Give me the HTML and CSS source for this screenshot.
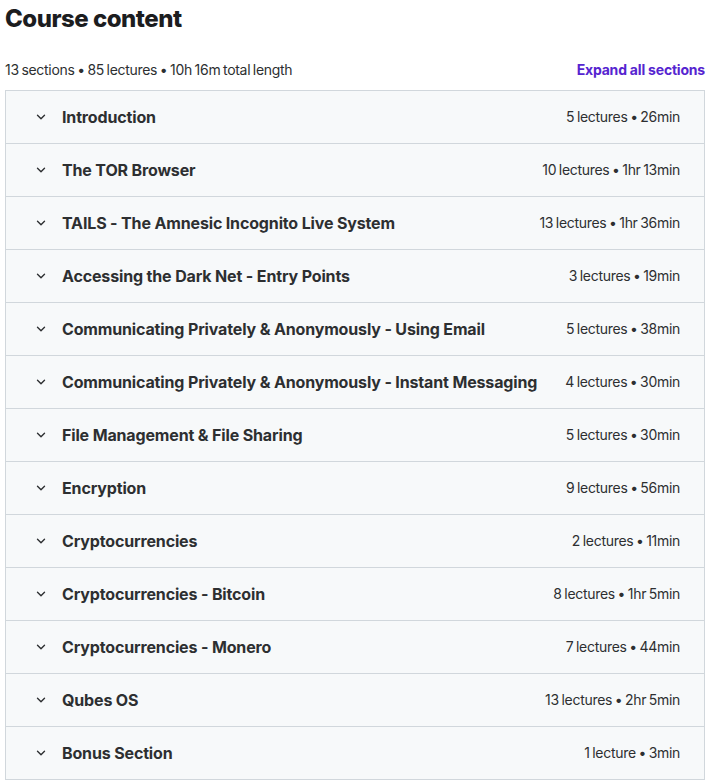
FILE: index.html
```html
<!DOCTYPE html>
<html lang="en">
<head>
    <meta charset="UTF-8">
    <title>Course content</title>
    <link rel="stylesheet" href="styles.css">
</head>
<body>
    <div class="curriculum">
        <h2 class="curriculum-title">Course content</h2>

        <div class="curriculum-meta">
            <span>13 sections • 85 lectures • 10h 16m total length</span>
            <button class="expand-all">Expand all sections</button>
        </div>

        <div class="sections">
            <div class="section-row">
                <svg class="chevron" viewBox="0 0 24 24"><path d="M6 9l6 6 6-6"/></svg>
                <span class="section-title">Introduction</span>
                <span class="section-info">5 lectures • 26min</span>
            </div>
            <div class="section-row">
                <svg class="chevron" viewBox="0 0 24 24"><path d="M6 9l6 6 6-6"/></svg>
                <span class="section-title">The TOR Browser</span>
                <span class="section-info">10 lectures • 1hr 13min</span>
            </div>
            <div class="section-row">
                <svg class="chevron" viewBox="0 0 24 24"><path d="M6 9l6 6 6-6"/></svg>
                <span class="section-title">TAILS - The Amnesic Incognito Live System</span>
                <span class="section-info">13 lectures • 1hr 36min</span>
            </div>
            <div class="section-row">
                <svg class="chevron" viewBox="0 0 24 24"><path d="M6 9l6 6 6-6"/></svg>
                <span class="section-title">Accessing the Dark Net - Entry Points</span>
                <span class="section-info">3 lectures • 19min</span>
            </div>
            <div class="section-row">
                <svg class="chevron" viewBox="0 0 24 24"><path d="M6 9l6 6 6-6"/></svg>
                <span class="section-title">Communicating Privately &amp; Anonymously - Using Email</span>
                <span class="section-info">5 lectures • 38min</span>
            </div>
            <div class="section-row">
                <svg class="chevron" viewBox="0 0 24 24"><path d="M6 9l6 6 6-6"/></svg>
                <span class="section-title">Communicating Privately &amp; Anonymously - Instant Messaging</span>
                <span class="section-info">4 lectures • 30min</span>
            </div>
            <div class="section-row">
                <svg class="chevron" viewBox="0 0 24 24"><path d="M6 9l6 6 6-6"/></svg>
                <span class="section-title">File Management &amp; File Sharing</span>
                <span class="section-info">5 lectures • 30min</span>
            </div>
            <div class="section-row">
                <svg class="chevron" viewBox="0 0 24 24"><path d="M6 9l6 6 6-6"/></svg>
                <span class="section-title">Encryption</span>
                <span class="section-info">9 lectures • 56min</span>
            </div>
            <div class="section-row">
                <svg class="chevron" viewBox="0 0 24 24"><path d="M6 9l6 6 6-6"/></svg>
                <span class="section-title">Cryptocurrencies</span>
                <span class="section-info">2 lectures • 11min</span>
            </div>
            <div class="section-row">
                <svg class="chevron" viewBox="0 0 24 24"><path d="M6 9l6 6 6-6"/></svg>
                <span class="section-title">Cryptocurrencies - Bitcoin</span>
                <span class="section-info">8 lectures • 1hr 5min</span>
            </div>
            <div class="section-row">
                <svg class="chevron" viewBox="0 0 24 24"><path d="M6 9l6 6 6-6"/></svg>
                <span class="section-title">Cryptocurrencies - Monero</span>
                <span class="section-info">7 lectures • 44min</span>
            </div>
            <div class="section-row">
                <svg class="chevron" viewBox="0 0 24 24"><path d="M6 9l6 6 6-6"/></svg>
                <span class="section-title">Qubes OS</span>
                <span class="section-info">13 lectures • 2hr 5min</span>
            </div>
            <div class="section-row">
                <svg class="chevron" viewBox="0 0 24 24"><path d="M6 9l6 6 6-6"/></svg>
                <span class="section-title">Bonus Section</span>
                <span class="section-info">1 lecture • 3min</span>
            </div>
        </div>
    </div>
</body>
</html>
```

FILE: styles.css
```css
* {
    margin: 0;
    padding: 0;
    box-sizing: border-box;
}

body {
    font-family: Inter, 'Noto Sans', sans-serif;
    background: #fff;
    color: #2d2f31;
}

.curriculum {
    width: 700px;
    margin-left: 5px;
}

.curriculum-title {
    font-size: 24px;
    font-weight: 800;
    line-height: 38px;
    letter-spacing: -0.5px;
    color: #1c1d1f;
}

.curriculum-meta {
    display: flex;
    justify-content: space-between;
    align-items: center;
    height: 52px;
    padding-top: 10px;
    font-size: 14px;
    letter-spacing: -0.3px;
    word-spacing: -1px;
    color: #2d2f31;
}

.expand-all {
    border: none;
    background: none;
    font-family: inherit;
    font-size: 14px;
    font-weight: 700;
    letter-spacing: -0.2px;
    word-spacing: 0;
    color: #5624d0;
    cursor: pointer;
}

.sections {
    border: 1px solid #d1d7dc;
    border-bottom: none;
}

.section-row {
    display: flex;
    align-items: center;
    height: 53px;
    padding: 0 24px 0 28px;
    background: #f7f9fa;
    border-bottom: 1px solid #d1d7dc;
}

.chevron {
    width: 14px;
    height: 14px;
    margin-right: 14px;
    fill: none;
    stroke: #2d2f31;
    stroke-width: 2.4;
    stroke-linecap: round;
    stroke-linejoin: round;
}

.section-title {
    flex: 1;
    font-size: 16px;
    font-weight: 700;
    letter-spacing: -0.15px;
    padding-bottom: 1px;
}

.section-info {
    font-size: 14px;
    letter-spacing: -0.3px;
    word-spacing: -1px;
    padding-bottom: 2px;
}
```
